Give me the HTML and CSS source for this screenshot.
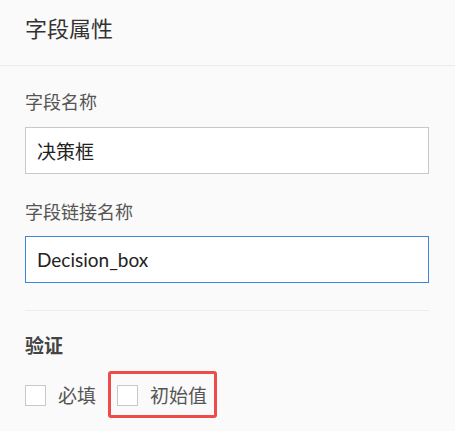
FILE: index.html
```html
<!DOCTYPE html>
<html lang="zh-CN">
<head>
<meta charset="utf-8">
<title>字段属性</title>
<link rel="stylesheet" href="styles.css">
</head>
<body>
<div class="panel">
  <div class="header">
    <h1 class="title">字段属性</h1>
  </div>
  <div class="content">
    <div class="field">
      <div class="label">字段名称</div>
      <div class="input">决策框</div>
    </div>
    <div class="field field-second">
      <div class="label">字段链接名称</div>
      <div class="input input-focus"><span class="latin">Decision_box</span></div>
    </div>
    <div class="divider"></div>
    <div class="section-title">验证</div>
    <div class="checks">
      <div class="check"><span class="box"></span><span class="check-text">必填</span></div>
      <div class="check check-highlight"><span class="box"></span><span class="check-text">初始值</span></div>
    </div>
  </div>
</div>
</body>
</html>
```

FILE: styles.css
```css
html, body {
  margin: 0;
  padding: 0;
  background: #fafafa;
}

body {
  font-family: "Lato", "Noto Sans CJK SC", sans-serif;
  color: #333;
  min-height: 431px;
}

.panel {
  width: 455px;
}

.header {
  padding: 17px 26px 24px 25px;
  border-bottom: 1px solid #ececec;
}

.title {
  margin: 0;
  font-size: 22px;
  line-height: 24px;
  font-weight: 400;
  color: #333;
}

.content {
  padding: 24px 26px 40px 25px;
}

.label {
  font-size: 18px;
  line-height: 24px;
  color: #555;
  margin-bottom: 13px;
}

.field-second {
  margin-top: 26px;
}

.field-second .label {
  margin-bottom: 12px;
}

.input {
  box-sizing: border-box;
  height: 47px;
  border: 1px solid #c9c9c9;
  background: #fff;
  padding: 0 11px;
  display: flex;
  align-items: center;
  font-size: 19px;
  color: #222;
}

.input-focus {
  border-color: #3a86d9;
}

.latin {
  font-family: "Lato", sans-serif;
  font-size: 19px;
  color: #222;
}

.divider {
  margin-top: 27px;
  height: 1px;
  background: #ededed;
}

.section-title {
  margin-top: 23px;
  font-size: 19px;
  line-height: 24px;
  font-weight: 700;
  color: #444;
}

.checks {
  margin-top: 25px;
  display: flex;
  align-items: center;
  gap: 21px;
}

.check {
  display: flex;
  align-items: center;
  gap: 12px;
  height: 24px;
}

.box {
  box-sizing: border-box;
  width: 21px;
  height: 21px;
  border: 1px solid #c8c8c8;
  background: #fff;
}

.check-text {
  font-size: 19px;
  line-height: 24px;
  color: #555;
  position: relative;
  top: 1px;
}

.check-highlight {
  position: relative;
}

.check-highlight::after {
  content: "";
  position: absolute;
  top: -12px;
  left: -9px;
  right: -10px;
  bottom: -11px;
  border: 3px solid #ef4b4b;
  border-radius: 3px;
}
```
